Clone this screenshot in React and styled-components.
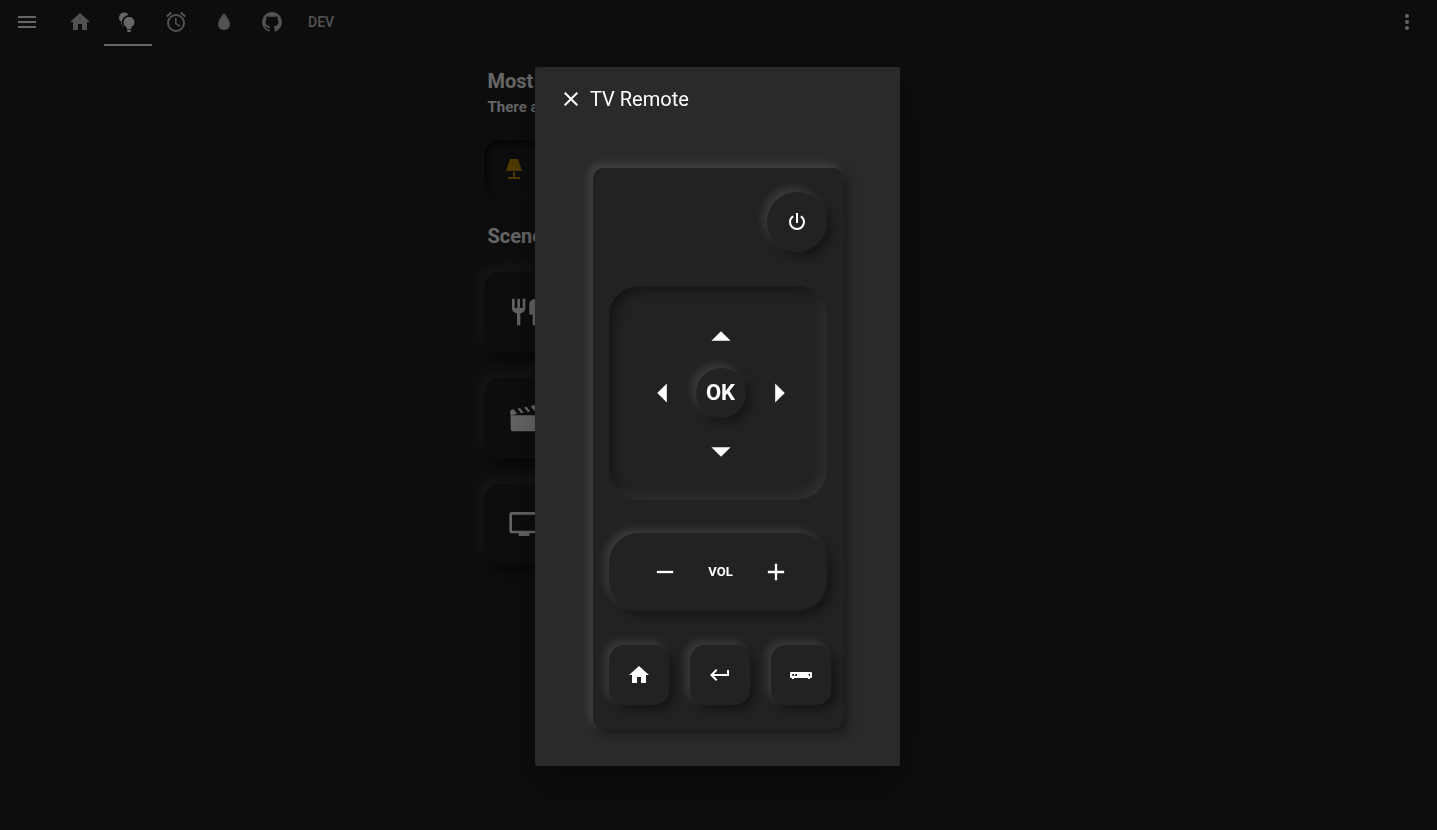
import React from 'react';
import styled, { createGlobalStyle, css } from 'styled-components';

const icons = {
  menu: 'M3,6H21V8H3V6M3,11H21V13H3V11M3,16H21V18H3V16Z',
  home: 'M10,20V14H14V20H19V12H22L12,3L2,12H5V20H10Z',
  alarm:
    'M12,20A7,7 0 0,1 5,13A7,7 0 0,1 12,6A7,7 0 0,1 19,13A7,7 0 0,1 12,20M12,4A9,9 0 0,0 3,13A9,9 0 0,0 12,22A9,9 0 0,0 21,13A9,9 0 0,0 12,4M12.5,8H11V14L15.75,16.85L16.5,15.62L12.5,13.25V8M7.88,3.39L6.6,1.86L2,5.71L3.29,7.24L7.88,3.39M22,5.72L17.4,1.86L16.11,3.39L20.71,7.25L22,5.72Z',
  water: 'M12,20A6,6 0 0,1 6,14C6,10 12,3.25 12,3.25C12,3.25 18,10 18,14A6,6 0 0,1 12,20Z',
  github:
    'M12,2A10,10 0 0,0 2,12C2,16.42 4.87,20.17 8.84,21.5C9.34,21.58 9.5,21.27 9.5,21C9.5,20.77 9.5,20.14 9.5,19.31C6.73,19.91 6.14,17.97 6.14,17.97C5.68,16.81 5.03,16.5 5.03,16.5C4.12,15.88 5.1,15.9 5.1,15.9C6.1,15.97 6.63,16.93 6.63,16.93C7.5,18.45 8.97,18 9.54,17.76C9.63,17.11 9.89,16.67 10.17,16.42C7.95,16.17 5.62,15.31 5.62,11.5C5.62,10.39 6,9.5 6.65,8.79C6.55,8.54 6.2,7.5 6.75,6.15C6.75,6.15 7.59,5.88 9.5,7.17C10.29,6.95 11.15,6.84 12,6.84C12.85,6.84 13.71,6.95 14.5,7.17C16.41,5.88 17.25,6.15 17.25,6.15C17.8,7.5 17.45,8.54 17.35,8.79C18,9.5 18.38,10.39 18.38,11.5C18.38,15.32 16.04,16.16 13.81,16.41C14.17,16.72 14.5,17.33 14.5,18.26C14.5,19.6 14.5,20.68 14.5,21C14.5,21.27 14.66,21.59 15.17,21.5C19.14,20.16 22,16.42 22,12A10,10 0 0,0 12,2Z',
  dots: 'M12,16A2,2 0 0,1 14,18A2,2 0 0,1 12,20A2,2 0 0,1 10,18A2,2 0 0,1 12,16M12,10A2,2 0 0,1 14,12A2,2 0 0,1 12,14A2,2 0 0,1 10,12A2,2 0 0,1 12,10M12,4A2,2 0 0,1 14,6A2,2 0 0,1 12,8A2,2 0 0,1 10,6A2,2 0 0,1 12,4Z',
  bulbs:
    'M13,7A5.3,5.3 0 0,0 10.3,16.9L10.8,18.6A0.8,0.8 0 0,0 11.5,19.2H14.5A0.8,0.8 0 0,0 15.2,18.6L15.7,16.9A5.3,5.3 0 0,0 13,7M11,20V20.7L11.7,22H14.3L15,20.7V20H11M12.5,5A5.1,5.1 0 1,0 4.6,11.3L5.8,12.4A7.3,7.3 0 0,1 12.5,5M5,12.8V13.6A0.8,0.8 0 0,0 5.8,14.4H6.4L6,13.4L5,12.8M6,15.4L7,16.8H8L7.1,15.4H6Z',
  lamp: 'M8,2H16L20,14H4L8,2M11,15H13V20H18V22H6V20H11V15Z',
  food:
    'M11,9H9V2H7V9H5V2H3V9C3,11.12 4.66,12.84 6.75,12.97V22H9.25V12.97C11.34,12.84 13,11.12 13,9V2H11V9M16,6V14H18.5V22H21V2C18.24,2 16,4.24 16,6Z',
  movie:
    'M20.84,2.18L16.91,2.96L19.65,6.5L21.62,6.1L20.84,2.18M13.97,3.54L12,3.93L14.75,7.46L16.71,7.07L13.97,3.54M9.07,4.5L7.1,4.91L9.85,8.44L11.81,8.05L9.07,4.5M4.16,5.5L3.18,5.69A2,2 0 0,0 1.61,8.04L2,10L6.9,9.03L4.16,5.5M2,10V20C2,21.11 2.9,22 4,22H20C21.11,22 22,21.11 22,20V10H2Z',
  tv: 'M21,17H3V5H21M21,3H3A2,2 0 0,0 1,5V17A2,2 0 0,0 3,19H8V21H16V19H21A2,2 0 0,0 23,17V5A2,2 0 0,0 21,3Z',
  close:
    'M19,6.41L17.59,5L12,10.59L6.41,5L5,6.41L10.59,12L5,17.59L6.41,19L12,13.41L17.59,19L19,17.59L13.41,12L19,6.41Z',
  power:
    'M16.56,5.44L15.11,6.89C16.84,7.94 18,9.83 18,12A6,6 0 0,1 12,18A6,6 0 0,1 6,12C6,9.83 7.16,7.94 8.88,6.88L7.44,5.44C5.36,6.88 4,9.28 4,12A8,8 0 0,0 12,20A8,8 0 0,0 20,12C20,9.28 18.64,6.88 16.56,5.44M13,3H11V13H13',
  up: 'M7,15L12,10L17,15H7Z',
  down: 'M7,10L12,15L17,10H7Z',
  left: 'M14,7L9,12L14,17V7Z',
  right: 'M10,17L15,12L10,7V17Z',
  minus: 'M19,13H5V11H19V13Z',
  plus: 'M19,13H13V19H11V13H5V11H11V5H13V11H19V13Z',
  back: 'M21,7V13H5.83L9.41,16.59L8,18L2,12L8,6L9.42,7.41L5.83,11H19V7H21Z',
  box: 'M2,9A1,1 0 0,0 1,10V14A1,1 0 0,0 2,15H3V16H5V15H19V16H21V15H22A1,1 0 0,0 23,14V10A1,1 0 0,0 22,9H2M3.3,11H5.1V13H3.3V11M6.2,11H8V13H6.2V11M19.8,11H21V13H19.8V11Z',
};

const GlobalStyle = createGlobalStyle`
  * { box-sizing: border-box; }
  body {
    margin: 0;
    background: #222;
    color: #fff;
    font-family: Roboto, "Liberation Sans", sans-serif;
  }
  button { font: inherit; color: inherit; border: 0; padding: 0; background: none; cursor: pointer; }
  h1, h2, h3, p { margin: 0; }
`;

const Svg = styled.svg`
  display: block;
  flex: none;
  width: ${(p) => p.$size}px;
  height: ${(p) => p.$size}px;
  fill: currentColor;
`;

const Icon = ({ name, size = 24 }) => (
  <Svg $size={size} viewBox="0 0 24 24" aria-hidden="true">
    <path fillRule="evenodd" d={icons[name]} />
  </Svg>
);

const raised = css`
  box-shadow: -4px -4px 8px rgba(255, 255, 255, 0.12), 5px 5px 10px rgba(0, 0, 0, 0.4);
`;

const Page = styled.div`
  min-height: 100vh;
  background: #222;
`;

const Toolbar = styled.header`
  display: flex;
  align-items: stretch;
  height: 46px;
  padding: 0 18px 0 15px;
`;

const IconButton = styled.button`
  display: flex;
`;

const ToolButton = styled(IconButton)`
  align-items: center;
  border-bottom: 2px solid transparent;
`;

const Tabs = styled.nav`
  display: flex;
  flex: 1;
  margin-left: 17px;
`;

const Tab = styled.button`
  display: flex;
  align-items: center;
  justify-content: center;
  min-width: 48px;
  padding: 0 12px;
  font-size: 14px;
  font-weight: 500;
  color: ${(p) => (p.$active ? '#fff' : '#cdcdcd')};
  border-bottom: 2px solid ${(p) => (p.$active ? '#fff' : 'transparent')};
`;

const Main = styled.main`
  width: 470px;
  margin: 0 auto;
  padding: 23px 90px 24px 0;
`;

const Heading = styled.h2`
  padding-left: 4px;
  font-size: 20px;
  line-height: 24px;
  font-weight: 700;
`;

const Note = styled.p`
  padding: 4px 4px 0;
  font-size: 15px;
  line-height: 20px;
  font-weight: 700;
`;

const LightCard = styled.button`
  display: flex;
  align-items: center;
  width: 100%;
  height: 60px;
  margin: 23px 0 24px;
  padding: 0 18px 2px;
  border-radius: 15px;
  color: #c69500;
  box-shadow: inset 4px 4px 10px rgba(0, 0, 0, 0.6), inset -4px -4px 10px rgba(255, 255, 255, 0.06);
`;

const Scenes = styled.section`
  display: grid;
  gap: 26px;
  margin-top: 24px;
`;

const SceneCard = styled.button`
  display: flex;
  align-items: center;
  height: 80px;
  padding: 0 24px;
  border-radius: 15px;
  background: #222;
  box-shadow: -5px -5px 15px rgba(255, 255, 255, 0.12), 5px 5px 15px rgba(0, 0, 0, 0.7);
`;

const Backdrop = styled.div`
  position: fixed;
  inset: 0;
  display: flex;
  align-items: center;
  justify-content: center;
  padding: 3px 2px 0 0;
  background: rgba(0, 0, 0, 0.6);
`;

const Dialog = styled.section`
  width: 365px;
  padding-bottom: 37px;
  border-radius: 2px;
  background: #2a2a2a;
  box-shadow: 0 11px 15px -7px rgba(0, 0, 0, 0.2), 0 24px 38px 3px rgba(0, 0, 0, 0.14),
    0 9px 46px 8px rgba(0, 0, 0, 0.12);
`;

const DialogHeader = styled.header`
  display: flex;
  align-items: center;
  gap: 7px;
  height: 64px;
  padding-left: 24px;
`;

const Title = styled.h1`
  font-size: 20px;
  line-height: 24px;
  font-weight: 400;
`;

const Remote = styled.div`
  width: 250px;
  margin: 37px auto 0 58px;
  padding: 24px 16px;
  border-radius: 10px;
  background: #222;
  ${raised}
`;

const PowerRow = styled.div`
  display: flex;
  justify-content: flex-end;
`;

const Key = styled.button`
  display: flex;
  flex: none;
  align-items: center;
  justify-content: center;
  width: ${(p) => p.$size}px;
  height: ${(p) => p.$size}px;
  border-radius: ${(p) => (p.$round ? '50%' : '15px')};
  background: #222;
  ${raised}
`;

const OkKey = styled(Key)`
  grid-area: 2 / 2;
  padding-bottom: 2px;
  font-size: 22px;
  font-weight: 700;
`;

const Pad = styled.div`
  display: grid;
  grid-template-columns: 48px 68px 48px;
  grid-template-rows: 48px 68px 48px;
  place-items: center;
  place-content: center;
  height: 214px;
  margin-top: 34px;
  padding-left: 5px;
  border-radius: 30px;
  box-shadow: inset 5px 5px 12px rgba(0, 0, 0, 0.4), inset -5px -5px 12px rgba(255, 255, 255, 0.07);
`;

const PadKey = styled.button`
  display: flex;
  grid-area: ${(p) => p.$area};
`;

const Volume = styled.div`
  display: flex;
  align-items: center;
  justify-content: center;
  gap: 29px;
  height: 78px;
  margin-top: 33px;
  padding-left: 5px;
  border-radius: 30px;
  ${raised}
`;

const VolumeLabel = styled.span`
  padding-bottom: 2px;
  font-size: 13px;
  font-weight: 700;
`;

const KeyRow = styled.div`
  display: flex;
  gap: 21px;
  margin-top: 34px;
`;

const tabs = [
  ['home', 'Home'],
  ['bulbs', 'Lights'],
  ['alarm', 'Alarms'],
  ['water', 'Water'],
  ['github', 'GitHub'],
];

export default function App() {
  return (
    <>
      <GlobalStyle />
      <Page>
        <Toolbar>
          <ToolButton aria-label="Menu"><Icon name="menu" /></ToolButton>
          <Tabs>
            {tabs.map(([icon, label]) => (
              <Tab key={icon} aria-label={label} $active={icon === 'bulbs'}><Icon name={icon} /></Tab>
            ))}
            <Tab>DEV</Tab>
          </Tabs>
          <ToolButton aria-label="More"><Icon name="dots" /></ToolButton>
        </Toolbar>
        <Main>
          <Heading>Most</Heading>
          <Note>There a</Note>
          <LightCard aria-label="Lamp"><Icon name="lamp" /></LightCard>
          <Heading>Scene</Heading>
          <Scenes>
            {['food', 'movie', 'tv'].map((name) => (
              <SceneCard key={name} aria-label={name}><Icon name={name} size={32} /></SceneCard>
            ))}
          </Scenes>
        </Main>
      </Page>
      <Backdrop>
        <Dialog role="dialog" aria-labelledby="remote-title">
          <DialogHeader>
            <IconButton aria-label="Close"><Icon name="close" /></IconButton>
            <Title id="remote-title">TV Remote</Title>
          </DialogHeader>
          <Remote>
            <PowerRow><Key $size={60} $round aria-label="Power"><Icon name="power" /></Key></PowerRow>
            <Pad>
              <PadKey $area="1 / 2" aria-label="Up"><Icon name="up" size={46} /></PadKey>
              <PadKey $area="2 / 1" aria-label="Left"><Icon name="left" size={46} /></PadKey>
              <OkKey $size={50} $round>OK</OkKey>
              <PadKey $area="2 / 3" aria-label="Right"><Icon name="right" size={46} /></PadKey>
              <PadKey $area="3 / 2" aria-label="Down"><Icon name="down" size={46} /></PadKey>
            </Pad>
            <Volume>
              <IconButton aria-label="Volume down"><Icon name="minus" size={28} /></IconButton>
              <VolumeLabel>VOL</VolumeLabel>
              <IconButton aria-label="Volume up"><Icon name="plus" size={28} /></IconButton>
            </Volume>
            <KeyRow>
              <Key $size={60} aria-label="Home"><Icon name="home" /></Key>
              <Key $size={60} aria-label="Back"><Icon name="back" /></Key>
              <Key $size={60} aria-label="Set-top box"><Icon name="box" /></Key>
            </KeyRow>
          </Remote>
        </Dialog>
      </Backdrop>
    </>
  );
}
